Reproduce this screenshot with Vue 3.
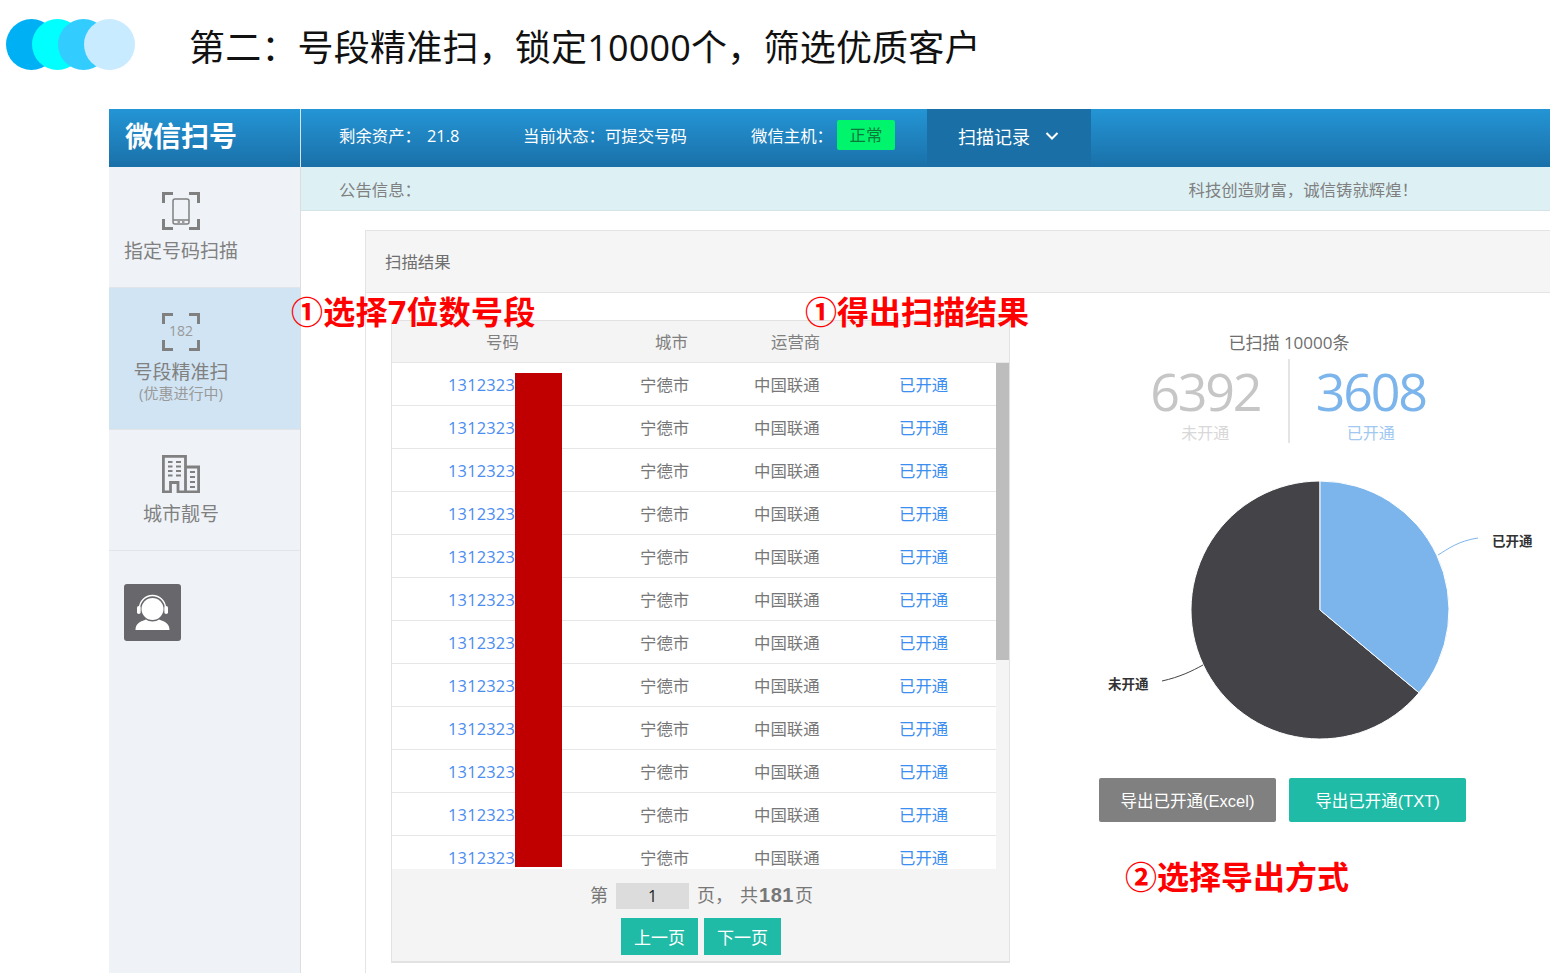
<script setup>
import { ref } from 'vue'

const rows = ref(Array.from({ length: 12 }, (_, i) => ({ id: i, num: '1312323', city: '宁德市', carrier: '中国联通', status: '已开通' })))

// 36.08% 已开通
const cx = 230
const cy = 141
const r = 129
const angle = 0.3608 * Math.PI * 2
const ex = cx + r * Math.sin(angle)
const ey = cy - r * Math.cos(angle)
const bluePath = `M${cx} ${cy} L${cx} ${cy - r} A${r} ${r} 0 0 1 ${ex} ${ey} Z`
const darkPath = `M${cx} ${cy} L${ex} ${ey} A${r} ${r} 0 1 1 ${cx} ${cy - r} Z`
</script>

<template>
  <div class="page">
    <div class="title-row">
      <div class="dots">
        <i class="dot d1"></i><i class="dot d2"></i><i class="dot d3"></i><i class="dot d4"></i>
      </div>
      <h1 class="page-title">第二：号段精准扫，锁定10000个，筛选优质客户</h1>
    </div>

    <div class="app">
      <aside class="side">
        <div class="brand">微信扫号</div>
        <div class="side-item">
          <svg class="side-icon" viewBox="0 0 38 38" fill="none" stroke="#808080">
            <path stroke-width="3" d="M1.5 11V1.5H11M27 1.5H36.5V11M1.5 27V36.5H11M27 36.5H36.5V27" />
            <rect x="11" y="7" width="16" height="25" rx="2" stroke-width="1.5" />
            <path stroke-width="1.3" d="M11 28H27M15.500 30H18M20 30H22.500" />
          </svg>
          <div class="side-label">指定号码扫描</div>
        </div>
        <div class="side-item active">
          <svg class="side-icon" viewBox="0 0 38 38" fill="none" stroke="#808080">
            <path stroke-width="3" d="M1.5 11V1.5H11M27 1.5H36.5V11M1.5 27V36.5H11M27 36.5H36.5V27" />
            <text x="19" y="23" text-anchor="middle" class="icon-num">182</text>
          </svg>
          <div class="side-label">号段精准扫</div>
          <div class="side-sub">(优惠进行中)</div>
        </div>
        <div class="side-item">
          <svg class="side-icon" viewBox="0 0 38 38" fill="none" stroke="#808080">
            <path stroke-width="2.800" d="M1.400 37V1.400H23.500V37H16V27.500H8.500V37ZM23.500 12H36.600V37H16" />
            <path stroke-width="2" d="M6 7H10.500M14 7H19M6 11.500H10.500M14 11.500H19M6 16H10.500M14 16H19M6 20.500H10.500M14 20.500H19M28 17H33M28 22H33M28 27H33M28 32H33" />
          </svg>
          <div class="side-label">城市靓号</div>
        </div>
        <div class="service">
          <svg viewBox="0 0 57 57" width="57" height="57">
            <rect width="57" height="57" rx="3" fill="#68686c" />
            <circle cx="28.500" cy="25" r="11" fill="#fff" />
            <path d="M15.500 27V24.500A13 13 0 0 1 41.500 24.500V27" fill="none" stroke="#fff" stroke-width="1.400" />
            <rect x="13" y="22" width="3.600" height="8" rx="1.800" fill="#fff" />
            <rect x="40.400" y="22" width="3.600" height="8" rx="1.800" fill="#fff" />
            <path d="M11.500 46C11.500 40 15 38 22 35.500C25 38 32 38 35 35.500C42 38 45.500 40 45.500 46Z" fill="#fff" />
          </svg>
        </div>
      </aside>

      <main class="main">
        <header class="topbar">
          <span class="top-item asset">剩余资产：<em>21.8</em></span>
          <span class="top-item state">当前状态：可提交号码</span>
          <span class="top-item host">微信主机：</span>
          <span class="badge">正常</span>
          <div class="dropdown">
            扫描记录
            <svg width="14" height="10" viewBox="0 0 14 10" fill="none" stroke="#fff" stroke-width="2"><path d="M1.500 2L7 7.500L12.500 2" /></svg>
          </div>
        </header>
        <div class="notice">
          <span>公告信息：</span>
          <span class="slogan">科技创造财富，诚信铸就辉煌！</span>
        </div>

        <div class="content">
          <section class="panel">
            <div class="panel-head">扫描结果</div>
            <div class="panel-body">
              <div class="table-box">
                <div class="thead">
                  <span class="th-num">号码</span>
                  <span class="th-city">城市</span>
                  <span class="th-carrier">运营商</span>
                </div>
                <div class="tbody">
                  <div class="rows">
                    <div v-for="row in rows" :key="row.id" class="row">
                      <span class="num">{{ row.num }}</span>
                      <span>{{ row.city }}</span>
                      <span>{{ row.carrier }}</span>
                      <span class="status">{{ row.status }}</span>
                    </div>
                  </div>
                  <div class="scrollbar"><div class="thumb"></div></div>
                  <div class="redact"></div>
                </div>
                <div class="pager">
                  <div class="pager-info">
                    <span>第</span>
                    <span class="page-input">1</span>
                    <span>页，</span>
                    <span class="total">共<b>181</b>页</span>
                  </div>
                  <div class="pager-btns">
                    <button class="pager-btn">上一页</button>
                    <button class="pager-btn">下一页</button>
                  </div>
                </div>
              </div>

              <div class="stats">
                <div class="stats-title">已扫描 10000条</div>
                <div class="counts">
                  <div class="count off">
                    <div class="count-num">6392</div>
                    <div class="count-label">未开通</div>
                  </div>
                  <div class="count on">
                    <div class="count-num">3608</div>
                    <div class="count-label">已开通</div>
                  </div>
                </div>
                <svg class="pie" width="460" height="282" viewBox="0 0 460 282">
                  <path :d="darkPath" fill="#434348" stroke="#fff" stroke-width="1" />
                  <path :d="bluePath" fill="#7cb5ec" stroke="#fff" stroke-width="1" />
                  <path d="M348 86C358 80 368 72 388 69" fill="none" stroke="#7cb5ec" />
                  <path d="M113 196C102 202 90 208 72 212" fill="none" stroke="#434348" />
                  <text x="402" y="77" class="pie-label">已开通</text>
                  <text x="18" y="220" class="pie-label">未开通</text>
                </svg>
                <div class="exports">
                  <button class="export grey">导出已开通(Excel)</button>
                  <button class="export green">导出已开通(TXT)</button>
                </div>
              </div>
            </div>
          </section>
        </div>
      </main>
    </div>

    <div class="note n1">①选择7位数号段</div>
    <div class="note n2">①得出扫描结果</div>
    <div class="note n3">②选择导出方式</div>
  </div>
</template>

<style>
html, body {
  margin: 0;
  background: #fff;
}
</style>

<style scoped>
.page {
  position: relative;
  width: 1550px;
  height: 973px;
  overflow: hidden;
  background: #fff;
  font-family: "Open Sans", "Noto Sans CJK SC", sans-serif;
  color: #777;
}

.title-row {
  display: flex;
  align-items: flex-start;
  height: 109px;
  padding-left: 6px;
  box-sizing: border-box;
}
.dots {
  display: flex;
  margin-top: 19px;
  margin-right: 55px;
}
.dot {
  display: block;
  width: 51px;
  height: 51px;
  border-radius: 50%;
  margin-right: -25px;
}
.d1 { background: #00b0f5; }
.d2 { background: #00ffff; }
.d3 { background: #33ccff; }
.d4 { background: #c9ebff; margin-right: 0; }
.page-title {
  margin: 22px 0 0 -1px;
  font-size: 36px;
  line-height: 52px;
  font-weight: 400;
  letter-spacing: 0.2px;
  color: #111;
  white-space: nowrap;
}

.app {
  display: flex;
  height: 864px;
  margin-left: 109px;
}

.side {
  width: 192px;
  flex: none;
  box-sizing: border-box;
  background: #eff3f8;
  border-right: 1px solid #ddd;
}
.brand {
  height: 58px;
  margin-right: -1px;
  padding-left: 16px;
  line-height: 54px;
  font-size: 28px;
  font-weight: 700;
  color: #fff;
  background: linear-gradient(#2495d5, #1a70a8);
  border-right: 1px solid #d8e4ec;
}
.side-item {
  width: 144px;
  padding: 25px 47px 0 0;
  height: 95px;
  display: flex;
  flex-direction: column;
  align-items: center;
  border-bottom: 1px solid #e2e4e8;
}
.side-item.active {
  height: 116px;
  background: #d0e4f3;
}
.side-icon {
  width: 38px;
  height: 38px;
  flex: none;
}
.icon-num {
  font-size: 14px;
  fill: #999;
  stroke: none;
  font-family: "Open Sans", sans-serif;
}
.side-label {
  margin-top: 7px;
  font-size: 19px;
  line-height: 28px;
  color: #808080;
  white-space: nowrap;
}
.side-sub {
  margin-top: -1px;
  font-size: 15px;
  line-height: 16px;
  color: #999;
  white-space: nowrap;
}
.service {
  padding: 33px 0 0 15px;
}
.service svg {
  display: block;
}

.main {
  flex: 1;
  min-width: 0;
}
.topbar {
  display: flex;
  align-items: center;
  height: 58px;
  padding-left: 38px;
  font-size: 16.400px;
  color: #fff;
  background: linear-gradient(#2495d5, #1a70a8);
  white-space: nowrap;
}
.top-item {
  padding-bottom: 6px;
}
.top-item em {
  font-style: normal;
  margin-left: 6px;
}
.asset { width: 184px; }
.state { width: 228px; }
.host { width: 86px; }
.badge {
  width: 58px;
  height: 30px;
  margin-bottom: 6px;
  line-height: 30px;
  text-align: center;
  border-radius: 2px;
  background: #00f56d;
  color: #0a7a3a;
}
.dropdown {
  display: flex;
  align-items: center;
  gap: 15px;
  height: 58px;
  width: 164px;
  box-sizing: border-box;
  margin-left: 32px;
  padding: 0 0 5px 31px;
  font-size: 18px;
  background: #1a70a6;
}
.notice {
  display: flex;
  justify-content: space-between;
  height: 44px;
  box-sizing: border-box;
  padding: 0 132px 0 38px;
  line-height: 45px;
  font-size: 16.400px;
  color: #808080;
  background: #ddf1f5;
  border-bottom: 1px solid #d3e3e8;
}

.content {
  padding: 19px 0 0 64px;
}
.panel {
  height: 800px;
  border: 1px solid #e4e4e4;
  border-right: none;
  border-bottom: none;
}
.panel-head {
  height: 62px;
  padding-left: 19px;
  line-height: 62px;
  font-size: 16.400px;
  color: #6e6e6e;
  background: #f5f5f5;
  border-bottom: 1px solid #e4e4e4;
  box-sizing: border-box;
}
.panel-body {
  display: flex;
  padding: 27px 0 0 25px;
}

.table-box {
  width: 619px;
  height: 643px;
  flex: none;
  box-sizing: border-box;
  display: flex;
  flex-direction: column;
  background: #f4f4f4;
  border: 1px solid #e2e2e2;
  border-bottom-width: 2px;
}
.thead {
  display: flex;
  height: 42px;
  flex: none;
  line-height: 42px;
  font-size: 16.400px;
  color: #808080;
  box-sizing: border-box;
  border-bottom: 1px solid #e6e6e6;
}
.th-num { width: 263px; padding-left: 94px; box-sizing: border-box; }
.th-city { width: 116px; }
.tbody {
  position: relative;
  height: 506px;
  flex: none;
  overflow: hidden;
  background: #fff;
}
.rows {
  width: 605px;
}
.row {
  display: grid;
  grid-template-columns: 248px 114px 145px 1fr;
  height: 43px;
  box-sizing: border-box;
  line-height: 43px;
  font-size: 16.400px;
  color: #777;
  border-bottom: 1px solid #e6e6e6;
}
.num {
  padding-left: 56px;
  letter-spacing: 0.2px;
  color: #4a8cf0;
}
.status {
  color: #3c8ef0;
}
.scrollbar {
  position: absolute;
  top: 0;
  right: 0;
  bottom: 0;
  width: 13px;
  background: #f4f4f4;
}
.thumb {
  height: 297px;
  background: #bdbdbd;
}
.redact {
  position: absolute;
  left: 123px;
  top: 10px;
  width: 47px;
  height: 494px;
  background: #c00000;
}

.pager {
  flex: 1;
  text-align: center;
}
.pager-info {
  display: flex;
  justify-content: center;
  align-items: flex-start;
  height: 26px;
  margin: 14px 0 9px;
  padding-left: 2px;
  font-size: 18px;
  line-height: 24px;
  color: #777;
}
.page-input {
  width: 73px;
  height: 26px;
  margin: 0 8px;
  line-height: 26px;
  font-size: 16px;
  color: #222;
  background: #dcdcdc;
}
.total {
  margin-left: 7px;
}
.total b {
  margin: 0 1px;
  font-weight: 700;
  font-size: 20px;
  letter-spacing: 0.5px;
  font-family: "Liberation Sans", sans-serif;
}
.pager-btns {
  display: flex;
  justify-content: center;
  gap: 6px;
  padding-left: 1px;
}
.pager-btn {
  width: 77px;
  height: 37px;
  padding: 0;
  border: none;
  font: inherit;
  font-size: 17px;
  color: #fff;
  background: #1fbba6;
}

.stats {
  flex: 1;
  min-width: 0;
  padding-top: 10px;
}
.stats-title {
  width: 558px;
  text-align: center;
  font-size: 17px;
  line-height: 26px;
  color: #6e6e6e;
}
.counts {
  display: flex;
  width: 328px;
  margin: 3px 0 0 114px;
  height: 84px;
}
.count {
  flex: 1;
  text-align: center;
}
.count.off {
  border-right: 2px solid #e4e4e4;
  padding-right: 1px;
}
.count-num {
  font-size: 52px;
  line-height: 63px;
  letter-spacing: -2.200px;
}
.count-label {
  font-size: 16px;
  line-height: 22px;
}
.count.off .count-num { color: #c6c6c6; }
.count.off .count-label { color: #d8d8d8; }
.count.on .count-num { color: #7cb5ec; }
.count.on .count-label { color: #a0c8f0; }

.pie {
  display: block;
  margin: 26px 0 0 80px;
}
.pie-label {
  font-family: "Liberation Serif", "Noto Sans CJK SC", serif;
  font-size: 13.500px;
  font-weight: 700;
  fill: #333;
}
.exports {
  display: flex;
  gap: 13px;
  margin: 27px 0 0 89px;
}
.export {
  width: 177px;
  height: 44px;
  padding: 0;
  border: none;
  border-radius: 2px;
  font-family: "Liberation Sans", "Noto Sans CJK SC", sans-serif;
  font-size: 16.500px;
  color: #fff;
}
.grey { background: #808080; }
.green { background: #1fbba6; }

.note {
  position: absolute;
  font-size: 32px;
  line-height: 40px;
  font-weight: 700;
  color: #f00;
  white-space: nowrap;
}
.n1 { left: 291px; top: 292px; letter-spacing: 0.3px; }
.n2 { left: 805px; top: 292px; }
.n3 { left: 1125px; top: 857px; }
</style>
